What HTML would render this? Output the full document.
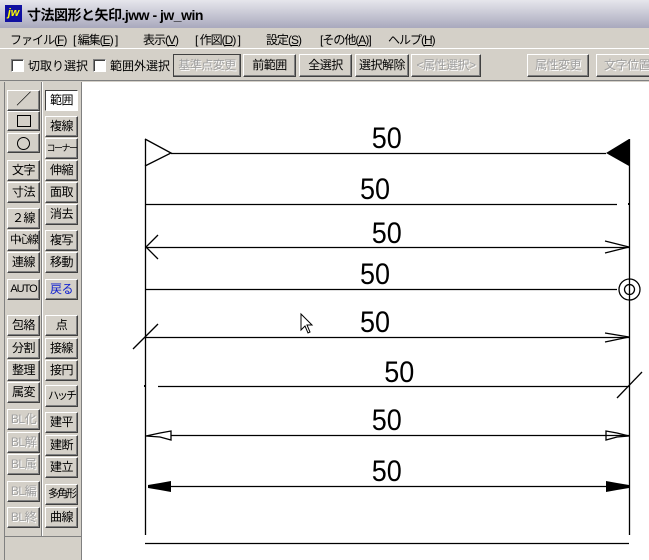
<!DOCTYPE html>
<html><head><meta charset="utf-8"><style>
*{margin:0;padding:0;box-sizing:border-box}
body{width:649px;height:560px;overflow:hidden;background:#d4d0c8;position:relative;font-family:"Liberation Sans","Noto Sans CJK JP",sans-serif;font-size:12px;color:#000}
.a{position:absolute;white-space:nowrap}
#title{left:0;top:0;width:649px;height:28px;background:linear-gradient(#e6e6ec,#a9a9bd);}
#menu{left:0;top:28px;width:649px;height:21px;background:#d4d0c8;border-bottom:1px solid #fff}
#menu span{position:absolute;top:3px;font-size:12px;letter-spacing:-1px}
.b{position:absolute;background:#d4d0c8;border:1px solid;border-color:#fff #404040 #404040 #fff;box-shadow:inset -1px -1px 0 #808080;text-align:center;font-size:12px;line-height:18px;white-space:nowrap;overflow:hidden;letter-spacing:-0.5px}
.n{letter-spacing:-2px;font-size:11px}
.d{color:#a0a0a0;text-shadow:1px 1px 0 #fff}
.cb{position:absolute;width:13px;height:13px;background:#fff;border:1px solid;border-color:#808080 #fff #fff #808080;box-shadow:inset 1px 1px 0 #404040}
#draw{left:82px;top:82px;width:567px;height:478px;background:#fff}
</style></head><body>
<div class="a" id="title">
 <div class="a" style="left:5px;top:5px;width:17px;height:17px;background:#1010a0;color:#ff0;font:bold italic 11px 'Liberation Sans';line-height:16px;text-align:center">jw</div>
 <div class="a" style="left:27px;top:5px;font-size:14px;font-weight:bold;letter-spacing:-0.5px">寸法図形と矢印.jww - jw_win</div>
</div>
<div class="a" id="menu">
 <span style="left:10px">ファイル(<u>F</u>)</span><span style="left:73px">[ 編集(<u>E</u>) ]</span><span style="left:143px">表示(<u>V</u>)</span><span style="left:195px">[ 作図(<u>D</u>) ]</span><span style="left:266px">設定(<u>S</u>)</span><span style="left:320px">[その他(<u>A</u>)]</span><span style="left:388px">ヘルプ(<u>H</u>)</span>
</div>
<div class="cb" style="left:11px;top:59px"></div><div class="a" style="left:28px;top:57px">切取り選択</div>
<div class="cb" style="left:93px;top:59px"></div><div class="a" style="left:110px;top:57px">範囲外選択</div>
<div class="b d" style="left:173px;top:54px;width:68px;height:23px;line-height:21px;border-color:#404040">基準点変更</div>
<div class="b" style="left:243px;top:54px;width:53px;height:23px;line-height:21px">前範囲</div>
<div class="b" style="left:299px;top:54px;width:53px;height:23px;line-height:21px">全選択</div>
<div class="b" style="left:355px;top:54px;width:54px;height:23px;line-height:21px">選択解除</div>
<div class="b d" style="left:411px;top:54px;width:70px;height:23px;line-height:21px">&lt;属性選択&gt;</div>
<div class="b d" style="left:527px;top:54px;width:62px;height:23px;line-height:21px">属性変更</div>
<div class="b d" style="left:596px;top:54px;width:62px;height:23px;line-height:21px">文字位置</div>
<div class="a" style="left:0;top:80px;width:649px;height:1px;background:#808080"></div>
<div class="a" style="left:4px;top:82px;width:1px;height:478px;background:#808080"></div>
<div class="a" style="left:41px;top:82px;width:1px;height:454px;background:#808080"></div>
<div class="a" style="left:42px;top:82px;width:1px;height:454px;background:#fff"></div>
<div class="a" style="left:5px;top:536px;width:76px;height:1px;background:#808080"></div>
<div class="a" style="left:81px;top:82px;width:1px;height:478px;background:#808080"></div>

<div class="b" style="left:7px;top:90px;width:33px;height:21px;font-size:15px">／</div>
<div class="b" style="left:7px;top:111px;width:33px;height:20px"><div style="margin:3px auto;width:14px;height:12px;border:1px solid #000"></div></div>
<div class="b" style="left:7px;top:133px;width:33px;height:20px"><div style="margin:3px auto;width:13px;height:13px;border:1px solid #000;border-radius:50%"></div></div>
<div class="b" style="left:7px;top:160px;width:33px;height:21px">文字</div>
<div class="b" style="left:7px;top:182px;width:33px;height:21px">寸法</div>
<div class="b" style="left:7px;top:208px;width:33px;height:21px">２線</div>
<div class="b n" style="left:7px;top:230px;width:33px;height:21px">中心線</div>
<div class="b" style="left:7px;top:252px;width:33px;height:21px">連線</div>
<div class="b" style="left:7px;top:279px;width:33px;height:21px;font-size:11px;letter-spacing:-1px">AUTO</div>
<div class="b" style="left:7px;top:315px;width:33px;height:21px">包絡</div>
<div class="b" style="left:7px;top:338px;width:33px;height:21px">分割</div>
<div class="b" style="left:7px;top:360px;width:33px;height:21px">整理</div>
<div class="b" style="left:7px;top:382px;width:33px;height:21px">属変</div>
<div class="b d" style="left:7px;top:409px;width:33px;height:21px">BL化</div>
<div class="b d" style="left:7px;top:432px;width:33px;height:21px">BL解</div>
<div class="b d" style="left:7px;top:454px;width:33px;height:21px">BL属</div>
<div class="b d" style="left:7px;top:481px;width:33px;height:21px">BL編</div>
<div class="b d" style="left:7px;top:507px;width:33px;height:21px">BL終</div>

<div class="b" style="left:45px;top:90px;width:33px;height:21px;background:#fff;border-color:#404040 #fff #fff #404040;box-shadow:none">範囲</div>
<div class="b" style="left:45px;top:116px;width:33px;height:21px">複線</div>
<div class="b n" style="left:45px;top:138px;width:33px;height:21px;font-size:9px;letter-spacing:-1.5px">コーナー</div>
<div class="b" style="left:45px;top:160px;width:33px;height:21px">伸縮</div>
<div class="b" style="left:45px;top:182px;width:33px;height:21px">面取</div>
<div class="b" style="left:45px;top:204px;width:33px;height:21px">消去</div>
<div class="b" style="left:45px;top:230px;width:33px;height:21px">複写</div>
<div class="b" style="left:45px;top:252px;width:33px;height:21px">移動</div>
<div class="b" style="left:45px;top:279px;width:33px;height:21px;color:#1020d0">戻る</div>
<div class="b" style="left:45px;top:315px;width:33px;height:21px">点</div>
<div class="b" style="left:45px;top:338px;width:33px;height:21px">接線</div>
<div class="b" style="left:45px;top:360px;width:33px;height:21px">接円</div>
<div class="b n" style="left:45px;top:385px;width:33px;height:22px;line-height:20px">ハッチ</div>
<div class="b" style="left:45px;top:412px;width:33px;height:21px">建平</div>
<div class="b" style="left:45px;top:435px;width:33px;height:21px">建断</div>
<div class="b" style="left:45px;top:457px;width:33px;height:21px">建立</div>
<div class="b n" style="left:45px;top:484px;width:33px;height:21px">多角形</div>
<div class="b" style="left:45px;top:507px;width:33px;height:21px">曲線</div>

<div class="a" id="draw"></div>
<svg class="a" style="left:0;top:0" width="649" height="560" viewBox="0 0 649 560">
<g stroke="#000" stroke-width="1.3" fill="none">
<line x1="145.5" y1="139" x2="145.5" y2="535"/>
<line x1="629.5" y1="139" x2="629.5" y2="535"/>
<line x1="171" y1="153.5" x2="606" y2="153.5"/>
<polyline points="145,139 171,153 145,166"/>
<line x1="145" y1="204.5" x2="617" y2="204.5"/>
<line x1="146" y1="247.5" x2="629" y2="247.5"/>
<polyline points="158,235 146,247 158,259"/>
<polyline points="605,241 629,247 605,253"/>
<line x1="145" y1="289.5" x2="617" y2="289.5"/>
<circle cx="629.5" cy="289.5" r="10.5"/>
<circle cx="629.5" cy="289.5" r="5"/>
<line x1="145" y1="337.5" x2="629" y2="337.5"/>
<line x1="133" y1="349" x2="158" y2="324"/>
<polyline points="605,333 629,337 605,342"/>
<line x1="158" y1="386.5" x2="629" y2="386.5"/>
<line x1="617" y1="398" x2="642" y2="372"/>
<line x1="171" y1="435.5" x2="629" y2="435.5"/>
<polygon points="171,431 171,440 160,437 146,436 160,433" />
<polygon points="606,431 606,440 617,437 629,436 617,433" />
<line x1="171" y1="486.5" x2="629" y2="486.5"/>
<line x1="145" y1="543.5" x2="629" y2="543.5"/>
</g>
<polygon points="606,153 629,139 629,166" fill="#000"/>
<polygon points="171,481 171,492 160,490 148,488 148,485 160,483" fill="#000"/>
<polygon points="606,481 606,492 617,490 629,488 629,485 617,483" fill="#000"/>
<rect x="144" y="385" width="2" height="2" fill="#000"/>
<rect x="628" y="203" width="2" height="2" fill="#000"/>
<g font-family="Liberation Sans" font-size="30" fill="#000" transform="scale(0.9,1)">
<text x="413" y="148">50</text>
<text x="400" y="199">50</text>
<text x="413" y="243">50</text>
<text x="400" y="284">50</text>
<text x="400" y="332">50</text>
<text x="427" y="382">50</text>
<text x="413" y="430">50</text>
<text x="413" y="481">50</text>
</g>
<path d="M301,314 L301,330 L305,326 L308,333 L310,332 L307,325 L312,325 Z" fill="#fff" stroke="#000" stroke-width="1"/>
</svg>
</body></html>
